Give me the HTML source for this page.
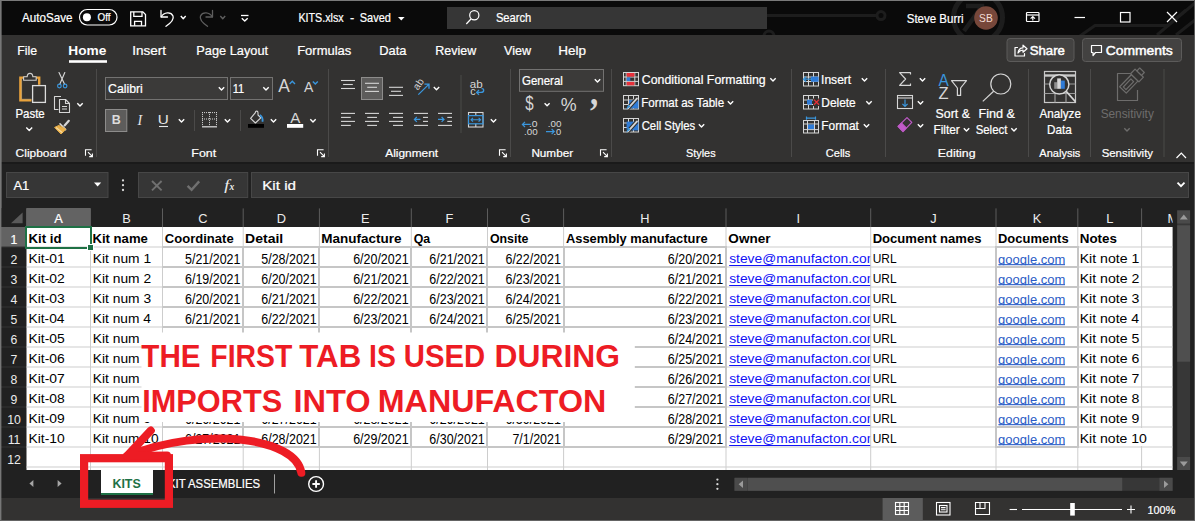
<!DOCTYPE html>
<html lang="en"><head><meta charset="utf-8"><title>KITS.xlsx - Excel</title>
<style>
html,body{margin:0;padding:0;background:#212121;overflow:hidden}
body{width:1195px;height:521px;position:relative;font-family:"Liberation Sans",sans-serif}
svg{position:absolute;left:0;top:0;display:block;font-family:"Liberation Sans",sans-serif}
text{white-space:pre}
</style></head><body>
<svg width="1195" height="521" viewBox="0 0 1195 521">
<rect x="0" y="0" width="1195" height="521" fill="#212121"/>
<rect x="0" y="0" width="1195" height="35" fill="#0a0a0a"/>
<rect x="0" y="35" width="1195" height="127" fill="#333231"/>
<rect x="0" y="162" width="1195" height="2" fill="#1a1a1a"/>
<rect x="0" y="167" width="1195" height="41" fill="#212121"/>
<rect x="0" y="0" width="1195" height="1" fill="#7a7a7a"/>
<rect x="0" y="0" width="1.4" height="521" fill="#777"/>
<rect x="1194" y="0" width="1" height="521" fill="#5a5a5a"/>
<clipPath id="tb"><rect x="0" y="1" width="1195" height="34"/></clipPath>
<g stroke="#1d1d1d" stroke-width="3" fill="none" clip-path="url(#tb)">
<path d="M767 15.6 H877"/><circle cx="881" cy="15.6" r="4"/><circle cx="769" cy="36" r="5"/>
<circle cx="978" cy="17.5" r="24.5" stroke-width="5"/><path d="M964 31 L980 9 M966 6 H982 V22" stroke-width="4.5"/>
<path d="M1195 3 L1157 35 M1195 20 L1176 35 M1080 36 L1095 25.5 H1168 L1186 10"/>
</g>
<text x="22.00" y="22.30" font-size="12.6" fill="#fff" textLength="50.46" lengthAdjust="spacingAndGlyphs" stroke="#fff" stroke-width="0.22">AutoSave</text>
<rect x="79.5" y="9.5" width="37.5" height="15.5" fill="none" stroke="#fff" stroke-width="1.2" rx="7.75"/>
<circle cx="86.9" cy="17.2" r="4" fill="#fff"/>
<text x="97.54" y="21.20" font-size="10.8" fill="#fff" textLength="12.99" lengthAdjust="spacingAndGlyphs" stroke="#fff" stroke-width="0.22">Off</text>
<g stroke="#fff" stroke-width="1.3" fill="none" stroke-linejoin="miter">
<path d="M130.7 11.8 H142.8 L145.5 14.5 V25.8 H130.7 Z"/>
<path d="M133.8 11.8 V16.4 H142 V11.8"/><path d="M134.6 25.8 V21.4 H141.5 V25.8"/>
</g>
<g stroke="#fff" stroke-width="1.3" fill="none" stroke-linecap="round" stroke-linejoin="round">
<path d="M161 10.5 V17 H167.5"/><path d="M161.3 16.8 C164 12 171 11.5 173 16 C174.5 20 170 23.5 166 26.3"/>
</g>
<path d="M180.80 16.00 L183.25 18.70 L185.70 16.00" stroke="#fff" fill="none" stroke-width="1.4" stroke-linejoin="round"/>
<g stroke="#5e5e5e" stroke-width="1.3" fill="none" stroke-linecap="round" stroke-linejoin="round">
<path d="M212.5 10.5 V17 H206"/><path d="M212.2 16.8 C209.5 12 202.5 11.5 200.5 16 C199 20 203.5 23.5 207.5 26.3"/>
</g>
<path d="M220.30 16.00 L222.75 18.70 L225.20 16.00" stroke="#5e5e5e" fill="none" stroke-width="1.4" stroke-linejoin="round"/>
<line x1="241" y1="15.5" x2="248.5" y2="15.5" stroke="#fff" stroke-width="1.3"/>
<path d="M241.80 18.20 L244.75 21.10 L247.70 18.20" stroke="#fff" fill="none" stroke-width="1.4" stroke-linejoin="round"/>
<text x="298.46" y="21.80" font-size="12.6" fill="#fff" textLength="45.25" lengthAdjust="spacingAndGlyphs" stroke="#fff" stroke-width="0.22">KITS.xlsx</text>
<text x="350.00" y="21.80" font-size="12.6" fill="#fff" stroke="#fff" stroke-width="0.22">-</text>
<text x="359.79" y="21.80" font-size="12.6" fill="#fff" textLength="31.11" lengthAdjust="spacingAndGlyphs" stroke="#fff" stroke-width="0.22">Saved</text>
<path d="M398 17 H404.6 L401.3 20.6 Z" stroke="none" fill="#fff" stroke-width="1"/>
<rect x="447" y="7" width="320" height="22" fill="#363636"/>
<circle cx="474.3" cy="15.3" r="4.6" fill="none" stroke="#fff" stroke-width="1.2"/>
<line x1="471" y1="19" x2="466.3" y2="24" stroke="#fff" stroke-width="1.2"/>
<text x="495.88" y="21.80" font-size="12.6" fill="#fff" textLength="35.38" lengthAdjust="spacingAndGlyphs" stroke="#fff" stroke-width="0.22">Search</text>
<text x="906.76" y="22.80" font-size="12.6" fill="#fff" textLength="56.86" lengthAdjust="spacingAndGlyphs" stroke="#fff" stroke-width="0.22">Steve Burri</text>
<circle cx="986" cy="18" r="11.8" fill="#77473a"/>
<text x="979.12" y="22.00" font-size="10.5" fill="#f3ddd5" textLength="13.62" lengthAdjust="spacingAndGlyphs">SB</text>
<g stroke="#fff" stroke-width="1.2" fill="none">
<rect x="1026.5" y="12.5" width="12.5" height="9" rx="0.8"/><path d="M1026.5 15 H1039"/><path d="M1032.8 20.5 V16.6 M1030.6 18.6 L1032.8 16.5 L1035 18.6"/>
</g>
<line x1="1074.5" y1="17.5" x2="1085" y2="17.5" stroke="#fff" stroke-width="1.2"/>
<rect x="1120.5" y="12.5" width="9.5" height="9.5" fill="none" stroke="#fff" stroke-width="1.2"/>
<path d="M1167 12 L1177 22 M1177 12 L1167 22" stroke="#fff" fill="none" stroke-width="1.2"/>
<text x="17.34" y="54.60" font-size="12.6" fill="#fff" textLength="19.87" lengthAdjust="spacingAndGlyphs" stroke="#fff" stroke-width="0.22">File</text>
<text x="68.34" y="54.60" font-size="12.6" fill="#fff" font-weight="700" textLength="38.04" lengthAdjust="spacingAndGlyphs">Home</text>
<rect x="69" y="60.2" width="38" height="2.6" fill="#fff"/>
<text x="132.23" y="54.60" font-size="12.6" fill="#fff" textLength="33.79" lengthAdjust="spacingAndGlyphs" stroke="#fff" stroke-width="0.22">Insert</text>
<text x="196.30" y="54.60" font-size="12.6" fill="#fff" textLength="71.78" lengthAdjust="spacingAndGlyphs" stroke="#fff" stroke-width="0.22">Page Layout</text>
<text x="297.18" y="54.60" font-size="12.6" fill="#fff" textLength="54.16" lengthAdjust="spacingAndGlyphs" stroke="#fff" stroke-width="0.22">Formulas</text>
<text x="379.19" y="54.60" font-size="12.6" fill="#fff" textLength="27.24" lengthAdjust="spacingAndGlyphs" stroke="#fff" stroke-width="0.22">Data</text>
<text x="435.33" y="54.60" font-size="12.6" fill="#fff" textLength="40.84" lengthAdjust="spacingAndGlyphs" stroke="#fff" stroke-width="0.22">Review</text>
<text x="504.00" y="54.60" font-size="12.6" fill="#fff" textLength="27.11" lengthAdjust="spacingAndGlyphs" stroke="#fff" stroke-width="0.22">View</text>
<text x="558.24" y="54.60" font-size="12.6" fill="#fff" textLength="27.81" lengthAdjust="spacingAndGlyphs" stroke="#fff" stroke-width="0.22">Help</text>
<rect x="1007" y="38.5" width="67" height="23" fill="#434241" stroke="#5c5b5a" stroke-width="1" rx="3"/>
<g stroke="#fff" stroke-width="1.2" fill="none" stroke-linejoin="round" stroke-linecap="round">
<path d="M1017.5 47.5 H1015 V56 H1024.5 V53.5"/><path d="M1018 53 C1018.5 49.5 1020.5 47.8 1023 47.8 V45.2 L1027 48.8 L1023 52.2 V50 C1021 50 1019.5 51 1018 53 Z"/>
</g>
<text x="1029.68" y="54.60" font-size="12.6" fill="#fff" textLength="35.19" lengthAdjust="spacingAndGlyphs" stroke="#fff" stroke-width="0.45">Share</text>
<rect x="1082.5" y="38.5" width="99" height="23" fill="#434241" stroke="#5c5b5a" stroke-width="1" rx="3"/>
<path d="M1091.5 45.5 H1101.5 V52.5 H1095.5 L1093 55.5 V52.5 H1091.5 Z" stroke="#fff" fill="none" stroke-width="1.2" stroke-linejoin="round"/>
<text x="1105.65" y="54.60" font-size="12.6" fill="#fff" textLength="67.17" lengthAdjust="spacingAndGlyphs" stroke="#fff" stroke-width="0.45">Comments</text>
<rect x="96.0" y="69" width="1" height="88" fill="#4b4a49"/>
<rect x="328.0" y="69" width="1" height="88" fill="#4b4a49"/>
<rect x="510.0" y="69" width="1" height="88" fill="#4b4a49"/>
<rect x="611.0" y="69" width="1" height="88" fill="#4b4a49"/>
<rect x="791.0" y="69" width="1" height="88" fill="#4b4a49"/>
<rect x="885.0" y="69" width="1" height="88" fill="#4b4a49"/>
<rect x="1028.0" y="69" width="1" height="88" fill="#4b4a49"/>
<rect x="1090.0" y="69" width="1" height="88" fill="#4b4a49"/>
<rect x="1163.5" y="69" width="1" height="88" fill="#4b4a49"/>
<g fill="none" stroke-linejoin="miter">
<path d="M31.5 100.4 H20.4 V77.6 H39.2 V84.8" stroke="#e9a23b" stroke-width="2.4"/>
<path d="M31.5 99.2 H21.6 V78.8" stroke="#f6d59c" stroke-width="0.6" opacity="0.7"/>
<path d="M23.6 80.2 V76.8 H27.2 C27.2 72.2 32.8 72.2 32.8 76.8 H36.2 V80.2 Z" stroke="#cfcfcf" stroke-width="1.1" fill="#333231" stroke-linejoin="round"/>
<rect x="32.6" y="85.6" width="12.8" height="16.8" stroke="#dcdcdc" stroke-width="1.3" fill="#333231"/>
</g>
<text x="15.41" y="117.90" font-size="12.4" fill="#fff" textLength="29.27" lengthAdjust="spacingAndGlyphs" stroke="#fff" stroke-width="0.22">Paste</text>
<path d="M26.30 127.50 L29.25 130.40 L32.20 127.50" stroke="#fff" fill="none" stroke-width="1.4" stroke-linejoin="round"/>
<g fill="none" stroke-linecap="round">
<path d="M59 72.6 L64.6 84.2 M64.8 72.6 L59.8 84.2" stroke="#d6d6d6" stroke-width="1.15"/>
<circle cx="59.4" cy="86" r="1.8" stroke="#3a96dd" stroke-width="1.2"/><circle cx="65.1" cy="86" r="1.8" stroke="#3a96dd" stroke-width="1.2"/>
</g>
<g fill="#333231" stroke="#d6d6d6" stroke-width="1.1" stroke-linejoin="round">
<path d="M61 96.5 H54.5 V109.5 H58.5" fill="none"/>
<path d="M59.5 99.5 H65.5 L69.5 103.5 V112.5 H59.5 Z"/><path d="M65.5 99.5 V103.5 H69.5" fill="none"/>
<path d="M62 106.5 H67 M62 109 H67" fill="none"/>
</g>
<path d="M77.30 103.30 L80.00 106.00 L82.70 103.30" stroke="#fff" fill="none" stroke-width="1.4" stroke-linejoin="round"/>
<g stroke-linejoin="round" stroke-linecap="round">
<path d="M64.6 125.4 L68.8 120.8" stroke="#d6d6d6" stroke-width="2.2" fill="none"/>
<path d="M60 123.8 L65.6 129.6" stroke="#d6d6d6" stroke-width="1.6" fill="none"/>
<path d="M59 125.4 L54.6 127.4 L61 134 L65.6 129.6 Z" fill="#e9b04a" stroke="#e9b04a" stroke-width="1"/>
<path d="M56.4 127.8 L62 132.4" stroke="#f8dca6" stroke-width="1.2" fill="none"/>
</g>
<text x="15.64" y="157.00" font-size="11.8" fill="#fff" textLength="51.09" lengthAdjust="spacingAndGlyphs" stroke="#fff" stroke-width="0.22">Clipboard</text>
<g stroke="#fff" stroke-width="1.1" fill="none"><path d="M91.6 149.7 H85.5 V155.79999999999998"/><path d="M88 152.2 L92.4 156.6 M89.2 156.6 H92.4 V153.39999999999998"/></g>
<rect x="105.5" y="77.5" width="122" height="22" fill="#3b3a39" stroke="#737271" stroke-width="1"/>
<text x="108.02" y="92.60" font-size="12.4" fill="#fff" textLength="34.82" lengthAdjust="spacingAndGlyphs" stroke="#fff" stroke-width="0.22">Calibri</text>
<path d="M218.80 87.30 L221.50 90.00 L224.20 87.30" stroke="#fff" fill="none" stroke-width="1.4" stroke-linejoin="round"/>
<rect x="230.5" y="77.5" width="42" height="22" fill="#3b3a39" stroke="#737271" stroke-width="1"/>
<text x="232.74" y="92.60" font-size="12.4" fill="#fff" textLength="11.49" lengthAdjust="spacingAndGlyphs" stroke="#fff" stroke-width="0.22">11</text>
<path d="M263.30 87.30 L266.00 90.00 L268.70 87.30" stroke="#fff" fill="none" stroke-width="1.4" stroke-linejoin="round"/>
<text x="278.30" y="92.40" font-size="17.5" fill="#d6d6d6" textLength="11.61" lengthAdjust="spacingAndGlyphs">A</text>
<path d="M289.6 84 L292.3 81.2 L295 84" stroke="#3a96dd" fill="none" stroke-width="1.4"/>
<text x="304.00" y="92.40" font-size="14.2" fill="#d6d6d6" textLength="9.33" lengthAdjust="spacingAndGlyphs">A</text>
<path d="M312.8 81.4 L315.3 84 L317.8 81.4" stroke="#3a96dd" fill="none" stroke-width="1.4"/>
<rect x="105.5" y="109.5" width="21.3" height="22" fill="#5d5c5b" stroke="#8d8c8b" stroke-width="1"/>
<text x="111.82" y="124.30" font-size="13.4" fill="#dcdcdc" font-weight="700" textLength="9.01" lengthAdjust="spacingAndGlyphs">B</text>
<text x="137.5" y="125.4" font-size="14" font-style="italic" fill="#e6e6e6" font-family="'Liberation Serif',serif">I</text>
<text x="157.81" y="124.20" font-size="12.6" fill="#e6e6e6" textLength="11.04" lengthAdjust="spacingAndGlyphs">U</text>
<line x1="159" y1="126.5" x2="168" y2="126.5" stroke="#e6e6e6" stroke-width="1.1"/>
<path d="M178.80 119.30 L181.50 122.00 L184.20 119.30" stroke="#fff" fill="none" stroke-width="1.4" stroke-linejoin="round"/>
<rect x="194" y="110" width="1" height="21" fill="#4b4a49"/>
<g stroke="#d6d6d6" stroke-width="1.1" fill="none">
<path d="M202 112.6 H217 M202 119 H217 M202.5 112.1 V125.1 M209.5 112.1 V125.1 M216.5 112.1 V125.1" stroke-dasharray="1 1" stroke-width="1"/>
<path d="M202 126.8 H217" stroke-width="1.3"/>
</g>
<path d="M224.80 119.30 L227.50 122.00 L230.20 119.30" stroke="#fff" fill="none" stroke-width="1.4" stroke-linejoin="round"/>
<rect x="240" y="110" width="1" height="21" fill="#4b4a49"/>
<g fill="none" stroke="#d6d6d6" stroke-width="1.1" stroke-linejoin="round">
<path d="M255.4 112.6 L250.6 118.4 L255.4 123 L260.8 117.8 L258 115 V112.8 C258 110.6 255.4 110.6 255.4 112.6 Z"/>
<path d="M259.8 115 C262 116.4 263 119 262.4 121.8" stroke="#3a96dd" stroke-width="1.8"/>
</g>
<rect x="248" y="124" width="16" height="3.8" fill="#000"/>
<path d="M270.80 119.30 L273.50 122.00 L276.20 119.30" stroke="#fff" fill="none" stroke-width="1.4" stroke-linejoin="round"/>
<text x="290.20" y="122.70" font-size="14.8" fill="#d6d6d6" textLength="10.13" lengthAdjust="spacingAndGlyphs">A</text>
<rect x="287" y="124" width="16.2" height="3.8" fill="#fff"/>
<path d="M310.30 119.30 L313.00 122.00 L315.70 119.30" stroke="#fff" fill="none" stroke-width="1.4" stroke-linejoin="round"/>
<text x="191.33" y="157.00" font-size="11.8" fill="#fff" textLength="24.88" lengthAdjust="spacingAndGlyphs" stroke="#fff" stroke-width="0.22">Font</text>
<g stroke="#fff" stroke-width="1.1" fill="none"><path d="M323.6 149.7 H317.5 V155.79999999999998"/><path d="M320 152.2 L324.4 156.6 M321.2 156.6 H324.4 V153.39999999999998"/></g>
<line x1="341" y1="80.5" x2="355" y2="80.5" stroke="#d6d6d6" stroke-width="1.1"/>
<line x1="343.1" y1="84.5" x2="352.8" y2="84.5" stroke="#d6d6d6" stroke-width="1.1"/>
<line x1="341" y1="88.5" x2="355" y2="88.5" stroke="#d6d6d6" stroke-width="1.1"/>
<rect x="361.5" y="77.5" width="21" height="22" fill="#5d5c5b" stroke="#8d8c8b" stroke-width="1"/>
<line x1="365" y1="83.3" x2="379" y2="83.3" stroke="#d6d6d6" stroke-width="1.1"/>
<line x1="367.2" y1="87.3" x2="377" y2="87.3" stroke="#d6d6d6" stroke-width="1.1"/>
<line x1="365" y1="91.4" x2="379" y2="91.4" stroke="#d6d6d6" stroke-width="1.1"/>
<line x1="389" y1="87.3" x2="403" y2="87.3" stroke="#d6d6d6" stroke-width="1.1"/>
<line x1="391" y1="91.3" x2="401" y2="91.3" stroke="#d6d6d6" stroke-width="1.1"/>
<line x1="389" y1="95.4" x2="403" y2="95.4" stroke="#d6d6d6" stroke-width="1.1"/>
<text x="0" y="0" font-size="10.2" fill="#d6d6d6" transform="translate(418 90.8) rotate(-56)">ab</text>
<path d="M418.3 94.6 L428.8 84.4 M424.4 84.2 H429 V88.8" stroke="#3a96dd" fill="none" stroke-width="1.3"/>
<path d="M433.80 87.00 L436.50 89.70 L439.20 87.00" stroke="#fff" fill="none" stroke-width="1.4" stroke-linejoin="round"/>
<line x1="341" y1="113.4" x2="355" y2="113.4" stroke="#d6d6d6" stroke-width="1.1"/>
<line x1="365" y1="113.4" x2="379" y2="113.4" stroke="#d6d6d6" stroke-width="1.1"/>
<line x1="389" y1="113.4" x2="403" y2="113.4" stroke="#d6d6d6" stroke-width="1.1"/>
<line x1="341" y1="117.4" x2="350.8" y2="117.4" stroke="#d6d6d6" stroke-width="1.1"/>
<line x1="367.2" y1="117.4" x2="377" y2="117.4" stroke="#d6d6d6" stroke-width="1.1"/>
<line x1="393" y1="117.4" x2="403" y2="117.4" stroke="#d6d6d6" stroke-width="1.1"/>
<line x1="341" y1="121.4" x2="355" y2="121.4" stroke="#d6d6d6" stroke-width="1.1"/>
<line x1="365" y1="121.4" x2="379" y2="121.4" stroke="#d6d6d6" stroke-width="1.1"/>
<line x1="389" y1="121.4" x2="403" y2="121.4" stroke="#d6d6d6" stroke-width="1.1"/>
<line x1="341" y1="125.4" x2="350.8" y2="125.4" stroke="#d6d6d6" stroke-width="1.1"/>
<line x1="367.2" y1="125.4" x2="377" y2="125.4" stroke="#d6d6d6" stroke-width="1.1"/>
<line x1="393" y1="125.4" x2="403" y2="125.4" stroke="#d6d6d6" stroke-width="1.1"/>
<line x1="414" y1="113.4" x2="428" y2="113.4" stroke="#d6d6d6" stroke-width="1.1"/>
<line x1="423" y1="117.4" x2="428" y2="117.4" stroke="#d6d6d6" stroke-width="1.1"/>
<line x1="423" y1="121.4" x2="428" y2="121.4" stroke="#d6d6d6" stroke-width="1.1"/>
<line x1="414" y1="125.4" x2="428" y2="125.4" stroke="#d6d6d6" stroke-width="1.1"/>
<path d="M420.4 119.4 H414.4 M416.8 117 L414.4 119.4 L416.8 121.8" stroke="#3a96dd" fill="none" stroke-width="1.2"/>
<line x1="438" y1="113.4" x2="452" y2="113.4" stroke="#d6d6d6" stroke-width="1.1"/>
<line x1="447.3" y1="117.4" x2="452" y2="117.4" stroke="#d6d6d6" stroke-width="1.1"/>
<line x1="447.3" y1="121.4" x2="452" y2="121.4" stroke="#d6d6d6" stroke-width="1.1"/>
<line x1="438" y1="125.4" x2="452" y2="125.4" stroke="#d6d6d6" stroke-width="1.1"/>
<path d="M438 119.4 H444 M441.6 117 L444 119.4 L441.6 121.8" stroke="#3a96dd" fill="none" stroke-width="1.2"/>
<rect x="460.5" y="75" width="1" height="58" fill="#4b4a49"/>
<text x="469.75" y="87.80" font-size="10.8" fill="#d6d6d6" textLength="12.94" lengthAdjust="spacingAndGlyphs">ab</text>
<text x="470.30" y="95.00" font-size="10.8" fill="#d6d6d6">c</text>
<path d="M476.6 92.4 H481 C484.6 92.4 484.4 88.2 481.6 88.6 M479 90 L476.6 92.4 L479 94.8" stroke="#3a96dd" fill="none" stroke-width="1.3"/>
<g fill="none" stroke="#d6d6d6" stroke-width="1.1">
<rect x="468.5" y="112.5" width="14.5" height="14.5"/><path d="M475.8 112.5 V115.6 M475.8 123.8 V127"/>
<rect x="468.5" y="115.6" width="14.5" height="8.2" stroke="#3a96dd" stroke-width="1.2"/>
<path d="M471 119.7 H480.6 M473 117.8 L471 119.7 L473 121.6 M478.6 117.8 L480.6 119.7 L478.6 121.6" stroke="#3a96dd" stroke-width="1.1"/>
</g>
<path d="M490.80 119.30 L493.50 122.00 L496.20 119.30" stroke="#fff" fill="none" stroke-width="1.4" stroke-linejoin="round"/>
<text x="385.30" y="157.00" font-size="11.8" fill="#fff" textLength="52.81" lengthAdjust="spacingAndGlyphs" stroke="#fff" stroke-width="0.22">Alignment</text>
<g stroke="#fff" stroke-width="1.1" fill="none"><path d="M505.6 149.7 H499.5 V155.79999999999998"/><path d="M502 152.2 L506.4 156.6 M503.2 156.6 H506.4 V153.39999999999998"/></g>
<rect x="519.5" y="69.5" width="84" height="21.8" fill="#3b3a39" stroke="#737271" stroke-width="1"/>
<text x="521.96" y="84.80" font-size="12.4" fill="#fff" textLength="40.88" lengthAdjust="spacingAndGlyphs" stroke="#fff" stroke-width="0.22">General</text>
<path d="M594.80 79.30 L597.50 82.00 L600.20 79.30" stroke="#fff" fill="none" stroke-width="1.4" stroke-linejoin="round"/>
<text x="525.16" y="110.30" font-size="19.4" fill="#d6d6d6" textLength="8.38" lengthAdjust="spacingAndGlyphs">$</text>
<path d="M544.60 103.30 L547.10 105.80 L549.60 103.30" stroke="#fff" fill="none" stroke-width="1.4" stroke-linejoin="round"/>
<text x="560.84" y="111.00" font-size="18" fill="#d6d6d6" textLength="15.89" lengthAdjust="spacingAndGlyphs">%</text>
<text x="590" y="104.7" font-size="38" font-weight="700" fill="#d6d6d6" font-family="'Liberation Serif',serif" textLength="8.2" lengthAdjust="spacingAndGlyphs">,</text>
<text x="528.93" y="126.80" font-size="8.8" fill="#d6d6d6" textLength="8.66" lengthAdjust="spacingAndGlyphs">.0</text>
<text x="523.98" y="134.50" font-size="8.8" fill="#d6d6d6" textLength="13.68" lengthAdjust="spacingAndGlyphs">.00</text>
<path d="M530.6 124.4 H522.4 M525 121.8 L522.4 124.4 L525 127" stroke="#3a96dd" fill="none" stroke-width="1.2"/>
<text x="547.78" y="126.80" font-size="8.8" fill="#d6d6d6" textLength="13.68" lengthAdjust="spacingAndGlyphs">.00</text>
<text x="553.52" y="134.50" font-size="8.8" fill="#d6d6d6" textLength="7.83" lengthAdjust="spacingAndGlyphs">.0</text>
<path d="M546 131.6 H554.2 M551.6 129 L554.2 131.6 L551.6 134.2" stroke="#3a96dd" fill="none" stroke-width="1.2"/>
<text x="531.38" y="157.00" font-size="11.8" fill="#fff" textLength="41.71" lengthAdjust="spacingAndGlyphs" stroke="#fff" stroke-width="0.22">Number</text>
<g stroke="#fff" stroke-width="1.1" fill="none"><path d="M606.6 149.7 H600.5 V155.79999999999998"/><path d="M603 152.2 L607.4 156.6 M604.2 156.6 H607.4 V153.39999999999998"/></g>
<g fill="none" stroke="#d6d6d6" stroke-width="1"><rect x="623.5" y="72.5" width="15" height="13.2"/><path d="M623.5 77 H638.5 M623.5 81.4 H638.5 M626.2 72.5 V85.7 M634.8 72.5 V85.7"/></g>
<rect x="626.7" y="73" width="7.7" height="3.6" fill="#e8303a"/>
<rect x="626.7" y="77.5" width="3.6" height="3.5" fill="#2f7bd6"/>
<rect x="626.7" y="81.9" width="7.7" height="3.4" fill="#e8303a"/>
<text x="641.82" y="83.90" font-size="12.4" fill="#fff" textLength="123.92" lengthAdjust="spacingAndGlyphs" stroke="#fff" stroke-width="0.22">Conditional Formatting</text>
<path d="M770.30 78.30 L773.00 81.00 L775.70 78.30" stroke="#fff" fill="none" stroke-width="1.4" stroke-linejoin="round"/>
<g fill="none" stroke="#d6d6d6" stroke-width="1"><rect x="623.5" y="95.5" width="15" height="13.5"/><path d="M623.5 100 H638.5 M623.5 104.5 H638.5 M628.5 95.5 V109 M633.5 95.5 V109"/></g>
<rect x="629" y="100.2" width="9.4" height="8.2" fill="#2f7bd6"/>
<path d="M627.5 108.8 L636.8 98.6" stroke="#333231" fill="none" stroke-width="4"/>
<path d="M628 108.3 L637 98.4" stroke="#d6d6d6" fill="none" stroke-width="1.8" stroke-linecap="round"/>
<path d="M626 109.6 L630.6 106.4 L628.2 104.8 Z" stroke="none" fill="#3a96dd" stroke-width="1"/>
<text x="641.30" y="107.00" font-size="12.4" fill="#fff" textLength="82.79" lengthAdjust="spacingAndGlyphs" stroke="#fff" stroke-width="0.22">Format as Table</text>
<path d="M727.80 101.30 L730.50 104.00 L733.20 101.30" stroke="#fff" fill="none" stroke-width="1.4" stroke-linejoin="round"/>
<g fill="none" stroke="#d6d6d6" stroke-width="1"><rect x="623.5" y="118.5" width="15" height="13.5"/><path d="M623.5 123 H638.5 M623.5 127.5 H638.5 M628.5 118.5 V132 M633.5 118.5 V132"/></g>
<rect x="626.6" y="121.6" width="11.8" height="8.8" fill="#2f7bd6"/>
<path d="M627.5 131.8 L636.8 121.6" stroke="#333231" fill="none" stroke-width="4"/>
<path d="M628 131.3 L637 121.4" stroke="#d6d6d6" fill="none" stroke-width="1.8" stroke-linecap="round"/>
<path d="M626 132.6 L630.6 129.4 L628.2 127.8 Z" stroke="none" fill="#3a96dd" stroke-width="1"/>
<text x="641.67" y="129.80" font-size="12.4" fill="#fff" textLength="53.54" lengthAdjust="spacingAndGlyphs" stroke="#fff" stroke-width="0.22">Cell Styles</text>
<path d="M698.80 124.30 L701.50 127.00 L704.20 124.30" stroke="#fff" fill="none" stroke-width="1.4" stroke-linejoin="round"/>
<text x="685.99" y="157.00" font-size="11.8" fill="#fff" textLength="29.60" lengthAdjust="spacingAndGlyphs" stroke="#fff" stroke-width="0.22">Styles</text>
<g fill="none" stroke="#d6d6d6" stroke-width="1"><rect x="803.5" y="72.5" width="15" height="13.5"/><path d="M803.5 77 H818.5 M803.5 81.5 H818.5 M808.5 72.5 V86 M813.5 72.5 V86"/></g>
<rect x="811" y="76.6" width="7.6" height="5.2" fill="#2f7bd6"/>
<path d="M812 79.2 H803.6 M806.2 76.6 L803.6 79.2 L806.2 81.8" stroke="#3a96dd" fill="none" stroke-width="1.3"/>
<text x="821.07" y="83.90" font-size="12.4" fill="#fff" textLength="30.13" lengthAdjust="spacingAndGlyphs" stroke="#fff" stroke-width="0.22">Insert</text>
<path d="M861.80 78.30 L864.50 81.00 L867.20 78.30" stroke="#fff" fill="none" stroke-width="1.4" stroke-linejoin="round"/>
<g fill="none" stroke="#d6d6d6" stroke-width="1"><rect x="803.5" y="95.5" width="15" height="13.5"/><path d="M803.5 100 H818.5 M803.5 104.5 H818.5 M808.5 95.5 V109 M813.5 95.5 V109"/></g>
<rect x="807" y="99.8" width="5" height="4.8" fill="#2f7bd6"/>
<rect x="813" y="98.5" width="7" height="7.6" fill="#333231"/>
<path d="M814 99.6 L819 104.8 M819 99.6 L814 104.8" stroke="#e8303a" fill="none" stroke-width="1.3"/>
<text x="821.27" y="107.00" font-size="12.4" fill="#fff" textLength="34.49" lengthAdjust="spacingAndGlyphs" stroke="#fff" stroke-width="0.22">Delete</text>
<path d="M866.30 101.30 L869.00 104.00 L871.70 101.30" stroke="#fff" fill="none" stroke-width="1.4" stroke-linejoin="round"/>
<g fill="none" stroke="#d6d6d6" stroke-width="1"><rect x="803.5" y="120.5" width="15" height="12.5"/><path d="M803.5 124 H818.5 M803.5 129.6 H818.5 M807.5 120.5 V133 M814.5 120.5 V133"/></g>
<rect x="808" y="124.5" width="6" height="4.6" fill="#2f7bd6"/>
<path d="M806.5 118.2 H815.5 M806.5 116.6 V119.8 M815.5 116.6 V119.8" stroke="#3a96dd" fill="none" stroke-width="1.2"/>
<text x="821.27" y="129.80" font-size="12.4" fill="#fff" textLength="37.66" lengthAdjust="spacingAndGlyphs" stroke="#fff" stroke-width="0.22">Format</text>
<path d="M863.80 124.30 L866.50 127.00 L869.20 124.30" stroke="#fff" fill="none" stroke-width="1.4" stroke-linejoin="round"/>
<text x="825.78" y="157.00" font-size="11.8" fill="#fff" textLength="24.61" lengthAdjust="spacingAndGlyphs" stroke="#fff" stroke-width="0.22">Cells</text>
<path d="M910.5 74.6 V72.6 H899.6 L905.6 79 L899.6 85.4 H910.5 V83.4" stroke="#d6d6d6" fill="none" stroke-width="1.2" stroke-linejoin="round"/>
<path d="M919.80 78.30 L922.50 81.00 L925.20 78.30" stroke="#fff" fill="none" stroke-width="1.4" stroke-linejoin="round"/>
<g fill="none" stroke="#d6d6d6" stroke-width="1.1"><rect x="897.5" y="95.5" width="15" height="13"/><path d="M897.5 98 H912.5"/></g>
<path d="M905 99.6 V106.4 M902.4 103.8 L905 106.4 L907.6 103.8" stroke="#3a96dd" fill="none" stroke-width="1.2"/>
<path d="M917.80 101.30 L920.50 104.00 L923.20 101.30" stroke="#fff" fill="none" stroke-width="1.4" stroke-linejoin="round"/>
<g stroke-linejoin="round"><path d="M898 126.4 L907 117.6 L911.8 122.4 L903 131.6 Z" fill="none" stroke="#c05ac8" stroke-width="1.2"/><path d="M898 126.4 L901.6 122.9 L906.4 127.8 L903 131.6 Z" fill="#c05ac8" stroke="#c05ac8" stroke-width="1"/></g>
<path d="M917.80 124.30 L920.50 127.00 L923.20 124.30" stroke="#fff" fill="none" stroke-width="1.4" stroke-linejoin="round"/>
<text x="938.60" y="85.60" font-size="15.6" fill="#3a96dd" textLength="10.32" lengthAdjust="spacingAndGlyphs">A</text>
<text x="938.49" y="99.20" font-size="16.4" fill="#d6d6d6" textLength="10.05" lengthAdjust="spacingAndGlyphs">Z</text>
<path d="M951.5 80.6 H966.5 L960.6 88 V95.4 H957.4 V88 Z" stroke="#d6d6d6" fill="none" stroke-width="1.2" stroke-linejoin="round"/>
<text x="935.62" y="117.90" font-size="12.4" fill="#fff" textLength="34.34" lengthAdjust="spacingAndGlyphs" stroke="#fff" stroke-width="0.22">Sort &amp;</text>
<text x="933.47" y="133.80" font-size="12.4" fill="#fff" textLength="26.35" lengthAdjust="spacingAndGlyphs" stroke="#fff" stroke-width="0.22">Filter</text>
<path d="M963.80 128.30 L966.50 131.00 L969.20 128.30" stroke="#fff" fill="none" stroke-width="1.4" stroke-linejoin="round"/>
<circle cx="1000.8" cy="84" r="10" fill="none" stroke="#d6d6d6" stroke-width="1.2"/>
<line x1="993.6" y1="91.2" x2="982.8" y2="101.4" stroke="#d6d6d6" stroke-width="1.2"/>
<text x="978.41" y="117.90" font-size="12.4" fill="#fff" textLength="36.58" lengthAdjust="spacingAndGlyphs" stroke="#fff" stroke-width="0.22">Find &amp;</text>
<text x="975.67" y="133.80" font-size="12.4" fill="#fff" textLength="31.69" lengthAdjust="spacingAndGlyphs" stroke="#fff" stroke-width="0.22">Select</text>
<path d="M1011.30 128.30 L1014.00 131.00 L1016.70 128.30" stroke="#fff" fill="none" stroke-width="1.4" stroke-linejoin="round"/>
<text x="937.84" y="157.00" font-size="11.8" fill="#fff" textLength="37.67" lengthAdjust="spacingAndGlyphs" stroke="#fff" stroke-width="0.22">Editing</text>
<g fill="none" stroke="#c8c8c8" stroke-width="1.2">
<rect x="1044.5" y="71.5" width="31" height="31"/><path d="M1044.5 75.5 H1075.5" stroke-width="2.4"/>
<path d="M1044.5 84 H1075.5 M1044.5 93.5 H1075.5 M1055 76 V102.5 M1066 76 V102.5" stroke="#9a9a9a"/>
</g>
<circle cx="1059.3" cy="84.4" r="9.6" fill="#333231" stroke="#d6d6d6" stroke-width="1.5"/>
<rect x="1054.2" y="82.2" width="3" height="6.6" fill="#8e8e8e"/>
<rect x="1057.2" y="78.4" width="3.7" height="10.4" fill="#d6d6d6"/>
<rect x="1060.9" y="80.6" width="3.9" height="8.2" fill="#2f7bd6"/>
<line x1="1066.2" y1="91.4" x2="1075.4" y2="101.6" stroke="#d6d6d6" stroke-width="1.6"/>
<text x="1039.40" y="117.90" font-size="12.4" fill="#fff" textLength="41.49" lengthAdjust="spacingAndGlyphs" stroke="#fff" stroke-width="0.22">Analyze</text>
<text x="1047.08" y="133.80" font-size="12.4" fill="#fff" textLength="24.77" lengthAdjust="spacingAndGlyphs" stroke="#fff" stroke-width="0.22">Data</text>
<text x="1039.30" y="157.00" font-size="11.8" fill="#fff" textLength="41.10" lengthAdjust="spacingAndGlyphs" stroke="#fff" stroke-width="0.22">Analysis</text>
<g fill="none" stroke="#6e6d6c" stroke-width="1.2" stroke-linejoin="round">
<path d="M1130 73.5 H1117.5 V100.5 H1137.5 V90"/>
<g transform="translate(1132 80.6) rotate(-46)"><rect x="-13" y="-4.6" width="17" height="9.2" fill="#333231"/><rect x="-10.6" y="-1.9" width="11" height="3.8"/><rect x="4" y="-5.8" width="6.4" height="11.6" fill="#333231"/><rect x="10.4" y="-3.2" width="4" height="6.4" fill="#333231"/></g>
</g>
<text x="1100.65" y="117.90" font-size="12.4" fill="#6e6d6c" textLength="53.17" lengthAdjust="spacingAndGlyphs">Sensitivity</text>
<path d="M1124.30 128.30 L1127.00 131.00 L1129.70 128.30" stroke="#6e6d6c" fill="none" stroke-width="1.4" stroke-linejoin="round"/>
<text x="1101.67" y="157.00" font-size="11.8" fill="#fff" textLength="51.35" lengthAdjust="spacingAndGlyphs" stroke="#fff" stroke-width="0.22">Sensitivity</text>
<path d="M1176.5 158 L1181.3 153 L1186 158" stroke="#fff" fill="none" stroke-width="1.2"/>
<rect x="6.5" y="172.5" width="101.5" height="25" fill="#363636" stroke="#474747" stroke-width="1"/>
<text x="13.40" y="189.90" font-size="13" fill="#fff" textLength="15.86" lengthAdjust="spacingAndGlyphs" stroke="#fff" stroke-width="0.22">A1</text>
<path d="M94 182.6 H101.2 L97.6 186.6 Z" stroke="none" fill="#fff" stroke-width="1"/>
<circle cx="123" cy="180.4" r="1.15" fill="#d8d8d8"/>
<circle cx="123" cy="185.2" r="1.15" fill="#d8d8d8"/>
<circle cx="123" cy="190" r="1.15" fill="#d8d8d8"/>
<rect x="138.5" y="172.5" width="109.2" height="25" fill="#363636" stroke="#474747" stroke-width="1"/>
<path d="M152 181 L161.6 190.4 M161.6 181 L152 190.4" stroke="#707070" fill="none" stroke-width="1.9"/>
<path d="M187.6 185.8 L191.6 189.8 L199.2 181.4" stroke="#707070" fill="none" stroke-width="2.4"/>
<text x="224.2" y="189.8" font-size="14.5" font-style="italic" fill="#f0f0f0" font-family="'Liberation Serif',serif" textLength="5" lengthAdjust="spacingAndGlyphs">f</text>
<text x="229.4" y="190.4" font-size="9.5" font-style="italic" font-weight="700" fill="#f0f0f0" font-family="'Liberation Serif',serif">x</text>
<rect x="251.5" y="172.5" width="937" height="25" fill="#363636" stroke="#474747" stroke-width="1"/>
<text x="262.21" y="189.90" font-size="13" fill="#fff" textLength="33.77" lengthAdjust="spacingAndGlyphs" stroke="#fff" stroke-width="0.22">Kit id</text>
<path d="M1177.5 182.6 L1181 186.2 L1184.5 182.6" stroke="#fff" fill="none" stroke-width="1.8"/>
<rect x="0" y="208" width="1173" height="19" fill="#212121"/>
<rect x="26.5" y="208" width="64" height="19" fill="#636363"/>
<rect x="0" y="227" width="26" height="243" fill="#212121"/>
<rect x="1" y="227" width="25.5" height="20" fill="#636363"/>
<path d="M22.6 212.4 V223.2 H11 Z" stroke="none" fill="#5a5a5a" stroke-width="1"/>
<rect x="26.5" y="227" width="1146.1" height="243" fill="#fff"/>
<rect x="90.0" y="208.4" width="1" height="18.6" fill="#5c5c5c"/>
<rect x="162.0" y="208.4" width="1" height="18.6" fill="#5c5c5c"/>
<rect x="242.7" y="208.4" width="1" height="18.6" fill="#5c5c5c"/>
<rect x="318.9" y="208.4" width="1" height="18.6" fill="#5c5c5c"/>
<rect x="410.8" y="208.4" width="1" height="18.6" fill="#5c5c5c"/>
<rect x="487.0" y="208.4" width="1" height="18.6" fill="#5c5c5c"/>
<rect x="563.1" y="208.4" width="1" height="18.6" fill="#5c5c5c"/>
<rect x="725.5" y="208.4" width="1" height="18.6" fill="#5c5c5c"/>
<rect x="870.2" y="208.4" width="1" height="18.6" fill="#5c5c5c"/>
<rect x="995.5" y="208.4" width="1" height="18.6" fill="#5c5c5c"/>
<rect x="1077.3" y="208.4" width="1" height="18.6" fill="#5c5c5c"/>
<rect x="1141.1" y="208.4" width="1" height="18.6" fill="#5c5c5c"/>
<rect x="26" y="208.4" width="1" height="18.6" fill="#5c5c5c"/>
<rect x="1" y="246.5" width="25" height="1" fill="#343434"/>
<rect x="1" y="266.5" width="25" height="1" fill="#343434"/>
<rect x="1" y="286.5" width="25" height="1" fill="#343434"/>
<rect x="1" y="306.5" width="25" height="1" fill="#343434"/>
<rect x="1" y="326.5" width="25" height="1" fill="#343434"/>
<rect x="1" y="346.5" width="25" height="1" fill="#343434"/>
<rect x="1" y="366.5" width="25" height="1" fill="#343434"/>
<rect x="1" y="386.5" width="25" height="1" fill="#343434"/>
<rect x="1" y="406.5" width="25" height="1" fill="#343434"/>
<rect x="1" y="426.5" width="25" height="1" fill="#343434"/>
<rect x="1" y="446.5" width="25" height="1" fill="#343434"/>
<text x="58.50" y="222.70" font-size="12.8" fill="#fff" text-anchor="middle" stroke="#fff" stroke-width="0.22">A</text>
<text x="126.50" y="222.70" font-size="12.8" fill="#ececec" text-anchor="middle">B</text>
<text x="202.85" y="222.70" font-size="12.8" fill="#ececec" text-anchor="middle">C</text>
<text x="281.30" y="222.70" font-size="12.8" fill="#ececec" text-anchor="middle">D</text>
<text x="365.35" y="222.70" font-size="12.8" fill="#ececec" text-anchor="middle">E</text>
<text x="449.40" y="222.70" font-size="12.8" fill="#ececec" text-anchor="middle">F</text>
<text x="525.55" y="222.70" font-size="12.8" fill="#ececec" text-anchor="middle">G</text>
<text x="644.80" y="222.70" font-size="12.8" fill="#ececec" text-anchor="middle">H</text>
<text x="798.35" y="222.70" font-size="12.8" fill="#ececec" text-anchor="middle">I</text>
<text x="933.35" y="222.70" font-size="12.8" fill="#ececec" text-anchor="middle">J</text>
<text x="1036.90" y="222.70" font-size="12.8" fill="#ececec" text-anchor="middle">K</text>
<text x="1109.70" y="222.70" font-size="12.8" fill="#ececec" text-anchor="middle">L</text>
<clipPath id="cg"><rect x="26" y="208" width="1146.6" height="262"/></clipPath>
<g clip-path="url(#cg)">
<text x="1167.60" y="222.70" font-size="12.8" fill="#ececec">M</text>
</g>
<text x="10.59" y="243.60" font-size="13.2" fill="#fff" textLength="6.83" lengthAdjust="spacingAndGlyphs" stroke="#fff" stroke-width="0.22">1</text>
<text x="10.59" y="263.60" font-size="13.2" fill="#ececec" textLength="6.83" lengthAdjust="spacingAndGlyphs">2</text>
<text x="10.59" y="283.60" font-size="13.2" fill="#ececec" textLength="6.83" lengthAdjust="spacingAndGlyphs">3</text>
<text x="10.59" y="303.60" font-size="13.2" fill="#ececec" textLength="6.83" lengthAdjust="spacingAndGlyphs">4</text>
<text x="10.59" y="323.60" font-size="13.2" fill="#ececec" textLength="6.83" lengthAdjust="spacingAndGlyphs">5</text>
<text x="10.59" y="343.60" font-size="13.2" fill="#ececec" textLength="6.83" lengthAdjust="spacingAndGlyphs">6</text>
<text x="10.59" y="363.60" font-size="13.2" fill="#ececec" textLength="6.83" lengthAdjust="spacingAndGlyphs">7</text>
<text x="10.59" y="383.60" font-size="13.2" fill="#ececec" textLength="6.83" lengthAdjust="spacingAndGlyphs">8</text>
<text x="10.59" y="403.60" font-size="13.2" fill="#ececec" textLength="6.83" lengthAdjust="spacingAndGlyphs">9</text>
<text x="7.17" y="423.60" font-size="13.2" fill="#ececec" textLength="13.65" lengthAdjust="spacingAndGlyphs">10</text>
<text x="7.63" y="443.60" font-size="13.2" fill="#ececec" textLength="12.74" lengthAdjust="spacingAndGlyphs">11</text>
<text x="7.17" y="463.60" font-size="13.2" fill="#ececec" textLength="13.65" lengthAdjust="spacingAndGlyphs">12</text>
<rect x="90.0" y="227" width="1" height="243" fill="#cdcdcd"/>
<rect x="162.0" y="227" width="1" height="243" fill="#cdcdcd"/>
<rect x="242.7" y="227" width="1" height="243" fill="#cdcdcd"/>
<rect x="318.9" y="227" width="1" height="243" fill="#cdcdcd"/>
<rect x="410.8" y="227" width="1" height="243" fill="#cdcdcd"/>
<rect x="487.0" y="227" width="1" height="243" fill="#cdcdcd"/>
<rect x="563.1" y="227" width="1" height="243" fill="#cdcdcd"/>
<rect x="725.5" y="227" width="1" height="243" fill="#cdcdcd"/>
<rect x="870.2" y="227" width="1" height="243" fill="#cdcdcd"/>
<rect x="995.5" y="227" width="1" height="243" fill="#cdcdcd"/>
<rect x="1077.3" y="227" width="1" height="243" fill="#cdcdcd"/>
<rect x="1141.1" y="227" width="1" height="243" fill="#cdcdcd"/>
<rect x="26.5" y="246.5" width="1146" height="1" fill="#cdcdcd"/>
<rect x="26.5" y="266.5" width="1146" height="1" fill="#cdcdcd"/>
<rect x="26.5" y="286.5" width="1146" height="1" fill="#cdcdcd"/>
<rect x="26.5" y="306.5" width="1146" height="1" fill="#cdcdcd"/>
<rect x="26.5" y="326.5" width="1146" height="1" fill="#cdcdcd"/>
<rect x="26.5" y="346.5" width="1146" height="1" fill="#cdcdcd"/>
<rect x="26.5" y="366.5" width="1146" height="1" fill="#cdcdcd"/>
<rect x="26.5" y="386.5" width="1146" height="1" fill="#cdcdcd"/>
<rect x="26.5" y="406.5" width="1146" height="1" fill="#cdcdcd"/>
<rect x="26.5" y="426.5" width="1146" height="1" fill="#cdcdcd"/>
<rect x="26.5" y="446.5" width="1146" height="1" fill="#cdcdcd"/>
<rect x="26.5" y="466.5" width="1146" height="1" fill="#cdcdcd"/>
<rect x="242" y="246" width="2" height="202" fill="#c6c6c6"/>
<rect x="318" y="246" width="2" height="202" fill="#c6c6c6"/>
<rect x="410" y="246" width="2" height="202" fill="#c6c6c6"/>
<rect x="486" y="246" width="2" height="202" fill="#c6c6c6"/>
<rect x="563" y="246" width="2" height="202" fill="#c6c6c6"/>
<rect x="725" y="246" width="2" height="202" fill="#c6c6c6"/>
<rect x="162.5" y="246" width="563.5" height="2" fill="#c6c6c6"/>
<rect x="162.5" y="266" width="563.5" height="2" fill="#c6c6c6"/>
<rect x="162.5" y="286" width="563.5" height="2" fill="#c6c6c6"/>
<rect x="162.5" y="306" width="563.5" height="2" fill="#c6c6c6"/>
<rect x="162.5" y="326" width="563.5" height="2" fill="#c6c6c6"/>
<rect x="162.5" y="346" width="563.5" height="2" fill="#c6c6c6"/>
<rect x="162.5" y="366" width="563.5" height="2" fill="#c6c6c6"/>
<rect x="162.5" y="386" width="563.5" height="2" fill="#c6c6c6"/>
<rect x="162.5" y="406" width="563.5" height="2" fill="#c6c6c6"/>
<rect x="162.5" y="426" width="563.5" height="2" fill="#c6c6c6"/>
<rect x="162.5" y="446" width="563.5" height="2" fill="#c6c6c6"/>
<rect x="995" y="246" width="84" height="2" fill="#c6c6c6"/>
<rect x="995" y="266" width="84" height="2" fill="#c6c6c6"/>
<rect x="995" y="286" width="84" height="2" fill="#c6c6c6"/>
<rect x="995" y="306" width="84" height="2" fill="#c6c6c6"/>
<rect x="995" y="326" width="84" height="2" fill="#c6c6c6"/>
<rect x="995" y="346" width="84" height="2" fill="#c6c6c6"/>
<rect x="995" y="366" width="84" height="2" fill="#c6c6c6"/>
<rect x="995" y="386" width="84" height="2" fill="#c6c6c6"/>
<rect x="995" y="406" width="84" height="2" fill="#c6c6c6"/>
<rect x="995" y="426" width="84" height="2" fill="#c6c6c6"/>
<rect x="995" y="446" width="84" height="2" fill="#c6c6c6"/>
<rect x="995" y="246" width="2" height="202" fill="#c6c6c6"/>
<rect x="1077" y="246" width="2" height="202" fill="#c6c6c6"/>
<text x="28.47" y="242.90" font-size="12.4" fill="#000" font-weight="700" textLength="33.15" lengthAdjust="spacingAndGlyphs">Kit id</text>
<text x="92.48" y="242.90" font-size="12.4" fill="#000" font-weight="700" textLength="55.38" lengthAdjust="spacingAndGlyphs">Kit name</text>
<text x="164.89" y="242.90" font-size="12.4" fill="#000" font-weight="700" textLength="68.77" lengthAdjust="spacingAndGlyphs">Coordinate</text>
<text x="245.13" y="242.90" font-size="12.4" fill="#000" font-weight="700" textLength="38.11" lengthAdjust="spacingAndGlyphs">Detail</text>
<text x="321.36" y="242.90" font-size="12.4" fill="#000" font-weight="700" textLength="80.16" lengthAdjust="spacingAndGlyphs">Manufacture</text>
<text x="413.71" y="242.90" font-size="12.4" fill="#000" font-weight="700" textLength="16.47" lengthAdjust="spacingAndGlyphs">Qa</text>
<text x="489.91" y="242.90" font-size="12.4" fill="#000" font-weight="700" textLength="38.51" lengthAdjust="spacingAndGlyphs">Onsite</text>
<text x="566.00" y="242.90" font-size="12.4" fill="#000" font-weight="700" textLength="141.55" lengthAdjust="spacingAndGlyphs">Assembly manufacture</text>
<text x="728.38" y="242.90" font-size="12.4" fill="#000" font-weight="700" textLength="42.17" lengthAdjust="spacingAndGlyphs">Owner</text>
<text x="872.68" y="242.90" font-size="12.4" fill="#000" font-weight="700" textLength="108.82" lengthAdjust="spacingAndGlyphs">Document names</text>
<text x="997.99" y="242.90" font-size="12.4" fill="#000" font-weight="700" textLength="70.62" lengthAdjust="spacingAndGlyphs">Documents</text>
<text x="1079.76" y="242.90" font-size="12.4" fill="#000" font-weight="700" textLength="37.23" lengthAdjust="spacingAndGlyphs">Notes</text>
<text x="28.52" y="262.50" font-size="12.4" fill="#000" textLength="36.26" lengthAdjust="spacingAndGlyphs">Kit-01</text>
<text x="92.82" y="262.50" font-size="12.4" fill="#000" textLength="58.28" lengthAdjust="spacingAndGlyphs">Kit num 1</text>
<text x="185.06" y="263.60" font-size="14.0" fill="#000" textLength="55.44" lengthAdjust="spacingAndGlyphs">5/21/2021</text>
<text x="261.26" y="263.60" font-size="14.0" fill="#000" textLength="55.44" lengthAdjust="spacingAndGlyphs">5/28/2021</text>
<text x="353.16" y="263.60" font-size="14.0" fill="#000" textLength="55.44" lengthAdjust="spacingAndGlyphs">6/20/2021</text>
<text x="429.36" y="263.60" font-size="14.0" fill="#000" textLength="55.44" lengthAdjust="spacingAndGlyphs">6/21/2021</text>
<text x="505.46" y="263.60" font-size="14.0" fill="#000" textLength="55.44" lengthAdjust="spacingAndGlyphs">6/22/2021</text>
<text x="667.86" y="263.60" font-size="14.0" fill="#000" textLength="55.44" lengthAdjust="spacingAndGlyphs">6/20/2021</text>
<clipPath id="ce2"><rect x="727" y="247" width="143.2" height="20"/></clipPath>
<g clip-path="url(#ce2)">
<text x="729.20" y="262.50" font-size="12.4" fill="#1212f6" textLength="149.00" lengthAdjust="spacingAndGlyphs">steve@manufacton.com</text>
<rect x="729.2" y="265" width="149" height="1" fill="#1212f6"/>
</g>
<text x="872.67" y="262.50" font-size="12.4" fill="#000" textLength="23.91" lengthAdjust="spacingAndGlyphs">URL</text>
<clipPath id="cg2"><rect x="997" y="247" width="80" height="18.2"/></clipPath>
<g clip-path="url(#cg2)">
<text x="997.99" y="263.60" font-size="12.6" fill="#2a5cc6" textLength="67.40" lengthAdjust="spacingAndGlyphs">google.com</text>
</g>
<rect x="998.4" y="264.1" width="66.6" height="1.1" fill="#2a5cc6"/>
<text x="1079.70" y="262.50" font-size="12.4" fill="#000" textLength="59.63" lengthAdjust="spacingAndGlyphs">Kit note 1</text>
<text x="28.52" y="282.50" font-size="12.4" fill="#000" textLength="36.26" lengthAdjust="spacingAndGlyphs">Kit-02</text>
<text x="92.82" y="282.50" font-size="12.4" fill="#000" textLength="58.28" lengthAdjust="spacingAndGlyphs">Kit num 2</text>
<text x="185.06" y="283.60" font-size="14.0" fill="#000" textLength="55.44" lengthAdjust="spacingAndGlyphs">6/19/2021</text>
<text x="261.26" y="283.60" font-size="14.0" fill="#000" textLength="55.44" lengthAdjust="spacingAndGlyphs">6/20/2021</text>
<text x="353.16" y="283.60" font-size="14.0" fill="#000" textLength="55.44" lengthAdjust="spacingAndGlyphs">6/21/2021</text>
<text x="429.36" y="283.60" font-size="14.0" fill="#000" textLength="55.44" lengthAdjust="spacingAndGlyphs">6/22/2021</text>
<text x="505.46" y="283.60" font-size="14.0" fill="#000" textLength="55.44" lengthAdjust="spacingAndGlyphs">6/23/2021</text>
<text x="667.86" y="283.60" font-size="14.0" fill="#000" textLength="55.44" lengthAdjust="spacingAndGlyphs">6/21/2021</text>
<clipPath id="ce3"><rect x="727" y="267" width="143.2" height="20"/></clipPath>
<g clip-path="url(#ce3)">
<text x="729.20" y="282.50" font-size="12.4" fill="#1212f6" textLength="149.00" lengthAdjust="spacingAndGlyphs">steve@manufacton.com</text>
<rect x="729.2" y="285" width="149" height="1" fill="#1212f6"/>
</g>
<text x="872.67" y="282.50" font-size="12.4" fill="#000" textLength="23.91" lengthAdjust="spacingAndGlyphs">URL</text>
<clipPath id="cg3"><rect x="997" y="267" width="80" height="18.2"/></clipPath>
<g clip-path="url(#cg3)">
<text x="997.99" y="283.60" font-size="12.6" fill="#2a5cc6" textLength="67.40" lengthAdjust="spacingAndGlyphs">google.com</text>
</g>
<rect x="998.4" y="284.1" width="66.6" height="1.1" fill="#2a5cc6"/>
<text x="1079.70" y="282.50" font-size="12.4" fill="#000" textLength="59.63" lengthAdjust="spacingAndGlyphs">Kit note 2</text>
<text x="28.52" y="302.50" font-size="12.4" fill="#000" textLength="36.26" lengthAdjust="spacingAndGlyphs">Kit-03</text>
<text x="92.82" y="302.50" font-size="12.4" fill="#000" textLength="58.28" lengthAdjust="spacingAndGlyphs">Kit num 3</text>
<text x="185.06" y="303.60" font-size="14.0" fill="#000" textLength="55.44" lengthAdjust="spacingAndGlyphs">6/20/2021</text>
<text x="261.26" y="303.60" font-size="14.0" fill="#000" textLength="55.44" lengthAdjust="spacingAndGlyphs">6/21/2021</text>
<text x="353.16" y="303.60" font-size="14.0" fill="#000" textLength="55.44" lengthAdjust="spacingAndGlyphs">6/22/2021</text>
<text x="429.36" y="303.60" font-size="14.0" fill="#000" textLength="55.44" lengthAdjust="spacingAndGlyphs">6/23/2021</text>
<text x="505.46" y="303.60" font-size="14.0" fill="#000" textLength="55.44" lengthAdjust="spacingAndGlyphs">6/24/2021</text>
<text x="667.86" y="303.60" font-size="14.0" fill="#000" textLength="55.44" lengthAdjust="spacingAndGlyphs">6/22/2021</text>
<clipPath id="ce4"><rect x="727" y="287" width="143.2" height="20"/></clipPath>
<g clip-path="url(#ce4)">
<text x="729.20" y="302.50" font-size="12.4" fill="#1212f6" textLength="149.00" lengthAdjust="spacingAndGlyphs">steve@manufacton.com</text>
<rect x="729.2" y="305" width="149" height="1" fill="#1212f6"/>
</g>
<text x="872.67" y="302.50" font-size="12.4" fill="#000" textLength="23.91" lengthAdjust="spacingAndGlyphs">URL</text>
<clipPath id="cg4"><rect x="997" y="287" width="80" height="18.2"/></clipPath>
<g clip-path="url(#cg4)">
<text x="997.99" y="303.60" font-size="12.6" fill="#2a5cc6" textLength="67.40" lengthAdjust="spacingAndGlyphs">google.com</text>
</g>
<rect x="998.4" y="304.1" width="66.6" height="1.1" fill="#2a5cc6"/>
<text x="1079.70" y="302.50" font-size="12.4" fill="#000" textLength="59.63" lengthAdjust="spacingAndGlyphs">Kit note 3</text>
<text x="28.52" y="322.50" font-size="12.4" fill="#000" textLength="36.03" lengthAdjust="spacingAndGlyphs">Kit-04</text>
<text x="92.83" y="322.50" font-size="12.4" fill="#000" textLength="58.06" lengthAdjust="spacingAndGlyphs">Kit num 4</text>
<text x="185.06" y="323.60" font-size="14.0" fill="#000" textLength="55.44" lengthAdjust="spacingAndGlyphs">6/21/2021</text>
<text x="261.26" y="323.60" font-size="14.0" fill="#000" textLength="55.44" lengthAdjust="spacingAndGlyphs">6/22/2021</text>
<text x="353.16" y="323.60" font-size="14.0" fill="#000" textLength="55.44" lengthAdjust="spacingAndGlyphs">6/23/2021</text>
<text x="429.36" y="323.60" font-size="14.0" fill="#000" textLength="55.44" lengthAdjust="spacingAndGlyphs">6/24/2021</text>
<text x="505.46" y="323.60" font-size="14.0" fill="#000" textLength="55.44" lengthAdjust="spacingAndGlyphs">6/25/2021</text>
<text x="667.86" y="323.60" font-size="14.0" fill="#000" textLength="55.44" lengthAdjust="spacingAndGlyphs">6/23/2021</text>
<clipPath id="ce5"><rect x="727" y="307" width="143.2" height="20"/></clipPath>
<g clip-path="url(#ce5)">
<text x="729.20" y="322.50" font-size="12.4" fill="#1212f6" textLength="149.00" lengthAdjust="spacingAndGlyphs">steve@manufacton.com</text>
<rect x="729.2" y="325" width="149" height="1" fill="#1212f6"/>
</g>
<text x="872.67" y="322.50" font-size="12.4" fill="#000" textLength="23.91" lengthAdjust="spacingAndGlyphs">URL</text>
<clipPath id="cg5"><rect x="997" y="307" width="80" height="18.2"/></clipPath>
<g clip-path="url(#cg5)">
<text x="997.99" y="323.60" font-size="12.6" fill="#2a5cc6" textLength="67.40" lengthAdjust="spacingAndGlyphs">google.com</text>
</g>
<rect x="998.4" y="324.1" width="66.6" height="1.1" fill="#2a5cc6"/>
<text x="1079.70" y="322.50" font-size="12.4" fill="#000" textLength="59.41" lengthAdjust="spacingAndGlyphs">Kit note 4</text>
<text x="28.52" y="342.50" font-size="12.4" fill="#000" textLength="36.26" lengthAdjust="spacingAndGlyphs">Kit-05</text>
<text x="92.82" y="342.50" font-size="12.4" fill="#000" textLength="58.28" lengthAdjust="spacingAndGlyphs">Kit num 5</text>
<text x="185.06" y="343.60" font-size="14.0" fill="#000" textLength="55.44" lengthAdjust="spacingAndGlyphs">6/22/2021</text>
<text x="261.26" y="343.60" font-size="14.0" fill="#000" textLength="55.44" lengthAdjust="spacingAndGlyphs">6/23/2021</text>
<text x="353.16" y="343.60" font-size="14.0" fill="#000" textLength="55.44" lengthAdjust="spacingAndGlyphs">6/24/2021</text>
<text x="429.36" y="343.60" font-size="14.0" fill="#000" textLength="55.44" lengthAdjust="spacingAndGlyphs">6/25/2021</text>
<text x="505.46" y="343.60" font-size="14.0" fill="#000" textLength="55.44" lengthAdjust="spacingAndGlyphs">6/26/2021</text>
<text x="667.86" y="343.60" font-size="14.0" fill="#000" textLength="55.44" lengthAdjust="spacingAndGlyphs">6/24/2021</text>
<clipPath id="ce6"><rect x="727" y="327" width="143.2" height="20"/></clipPath>
<g clip-path="url(#ce6)">
<text x="729.20" y="342.50" font-size="12.4" fill="#1212f6" textLength="149.00" lengthAdjust="spacingAndGlyphs">steve@manufacton.com</text>
<rect x="729.2" y="345" width="149" height="1" fill="#1212f6"/>
</g>
<text x="872.67" y="342.50" font-size="12.4" fill="#000" textLength="23.91" lengthAdjust="spacingAndGlyphs">URL</text>
<clipPath id="cg6"><rect x="997" y="327" width="80" height="18.2"/></clipPath>
<g clip-path="url(#cg6)">
<text x="997.99" y="343.60" font-size="12.6" fill="#2a5cc6" textLength="67.40" lengthAdjust="spacingAndGlyphs">google.com</text>
</g>
<rect x="998.4" y="344.1" width="66.6" height="1.1" fill="#2a5cc6"/>
<text x="1079.70" y="342.50" font-size="12.4" fill="#000" textLength="59.63" lengthAdjust="spacingAndGlyphs">Kit note 5</text>
<text x="28.52" y="362.50" font-size="12.4" fill="#000" textLength="36.26" lengthAdjust="spacingAndGlyphs">Kit-06</text>
<text x="92.82" y="362.50" font-size="12.4" fill="#000" textLength="58.28" lengthAdjust="spacingAndGlyphs">Kit num 6</text>
<text x="185.06" y="363.60" font-size="14.0" fill="#000" textLength="55.44" lengthAdjust="spacingAndGlyphs">6/23/2021</text>
<text x="261.26" y="363.60" font-size="14.0" fill="#000" textLength="55.44" lengthAdjust="spacingAndGlyphs">6/24/2021</text>
<text x="353.16" y="363.60" font-size="14.0" fill="#000" textLength="55.44" lengthAdjust="spacingAndGlyphs">6/25/2021</text>
<text x="429.36" y="363.60" font-size="14.0" fill="#000" textLength="55.44" lengthAdjust="spacingAndGlyphs">6/26/2021</text>
<text x="505.46" y="363.60" font-size="14.0" fill="#000" textLength="55.44" lengthAdjust="spacingAndGlyphs">6/27/2021</text>
<text x="667.86" y="363.60" font-size="14.0" fill="#000" textLength="55.44" lengthAdjust="spacingAndGlyphs">6/25/2021</text>
<clipPath id="ce7"><rect x="727" y="347" width="143.2" height="20"/></clipPath>
<g clip-path="url(#ce7)">
<text x="729.20" y="362.50" font-size="12.4" fill="#1212f6" textLength="149.00" lengthAdjust="spacingAndGlyphs">steve@manufacton.com</text>
<rect x="729.2" y="365" width="149" height="1" fill="#1212f6"/>
</g>
<text x="872.67" y="362.50" font-size="12.4" fill="#000" textLength="23.91" lengthAdjust="spacingAndGlyphs">URL</text>
<clipPath id="cg7"><rect x="997" y="347" width="80" height="18.2"/></clipPath>
<g clip-path="url(#cg7)">
<text x="997.99" y="363.60" font-size="12.6" fill="#2a5cc6" textLength="67.40" lengthAdjust="spacingAndGlyphs">google.com</text>
</g>
<rect x="998.4" y="364.1" width="66.6" height="1.1" fill="#2a5cc6"/>
<text x="1079.70" y="362.50" font-size="12.4" fill="#000" textLength="59.63" lengthAdjust="spacingAndGlyphs">Kit note 6</text>
<text x="28.52" y="382.50" font-size="12.4" fill="#000" textLength="36.26" lengthAdjust="spacingAndGlyphs">Kit-07</text>
<text x="92.82" y="382.50" font-size="12.4" fill="#000" textLength="58.28" lengthAdjust="spacingAndGlyphs">Kit num 7</text>
<text x="185.06" y="383.60" font-size="14.0" fill="#000" textLength="55.44" lengthAdjust="spacingAndGlyphs">6/24/2021</text>
<text x="261.26" y="383.60" font-size="14.0" fill="#000" textLength="55.44" lengthAdjust="spacingAndGlyphs">6/25/2021</text>
<text x="353.16" y="383.60" font-size="14.0" fill="#000" textLength="55.44" lengthAdjust="spacingAndGlyphs">6/26/2021</text>
<text x="429.36" y="383.60" font-size="14.0" fill="#000" textLength="55.44" lengthAdjust="spacingAndGlyphs">6/27/2021</text>
<text x="505.46" y="383.60" font-size="14.0" fill="#000" textLength="55.44" lengthAdjust="spacingAndGlyphs">6/28/2021</text>
<text x="667.86" y="383.60" font-size="14.0" fill="#000" textLength="55.44" lengthAdjust="spacingAndGlyphs">6/26/2021</text>
<clipPath id="ce8"><rect x="727" y="367" width="143.2" height="20"/></clipPath>
<g clip-path="url(#ce8)">
<text x="729.20" y="382.50" font-size="12.4" fill="#1212f6" textLength="149.00" lengthAdjust="spacingAndGlyphs">steve@manufacton.com</text>
<rect x="729.2" y="385" width="149" height="1" fill="#1212f6"/>
</g>
<text x="872.67" y="382.50" font-size="12.4" fill="#000" textLength="23.91" lengthAdjust="spacingAndGlyphs">URL</text>
<clipPath id="cg8"><rect x="997" y="367" width="80" height="18.2"/></clipPath>
<g clip-path="url(#cg8)">
<text x="997.99" y="383.60" font-size="12.6" fill="#2a5cc6" textLength="67.40" lengthAdjust="spacingAndGlyphs">google.com</text>
</g>
<rect x="998.4" y="384.1" width="66.6" height="1.1" fill="#2a5cc6"/>
<text x="1079.70" y="382.50" font-size="12.4" fill="#000" textLength="59.63" lengthAdjust="spacingAndGlyphs">Kit note 7</text>
<text x="28.52" y="402.50" font-size="12.4" fill="#000" textLength="36.26" lengthAdjust="spacingAndGlyphs">Kit-08</text>
<text x="92.82" y="402.50" font-size="12.4" fill="#000" textLength="58.28" lengthAdjust="spacingAndGlyphs">Kit num 8</text>
<text x="185.06" y="403.60" font-size="14.0" fill="#000" textLength="55.44" lengthAdjust="spacingAndGlyphs">6/25/2021</text>
<text x="261.26" y="403.60" font-size="14.0" fill="#000" textLength="55.44" lengthAdjust="spacingAndGlyphs">6/26/2021</text>
<text x="353.16" y="403.60" font-size="14.0" fill="#000" textLength="55.44" lengthAdjust="spacingAndGlyphs">6/27/2021</text>
<text x="429.36" y="403.60" font-size="14.0" fill="#000" textLength="55.44" lengthAdjust="spacingAndGlyphs">6/28/2021</text>
<text x="505.46" y="403.60" font-size="14.0" fill="#000" textLength="55.44" lengthAdjust="spacingAndGlyphs">6/29/2021</text>
<text x="667.86" y="403.60" font-size="14.0" fill="#000" textLength="55.44" lengthAdjust="spacingAndGlyphs">6/27/2021</text>
<clipPath id="ce9"><rect x="727" y="387" width="143.2" height="20"/></clipPath>
<g clip-path="url(#ce9)">
<text x="729.20" y="402.50" font-size="12.4" fill="#1212f6" textLength="149.00" lengthAdjust="spacingAndGlyphs">steve@manufacton.com</text>
<rect x="729.2" y="405" width="149" height="1" fill="#1212f6"/>
</g>
<text x="872.67" y="402.50" font-size="12.4" fill="#000" textLength="23.91" lengthAdjust="spacingAndGlyphs">URL</text>
<clipPath id="cg9"><rect x="997" y="387" width="80" height="18.2"/></clipPath>
<g clip-path="url(#cg9)">
<text x="997.99" y="403.60" font-size="12.6" fill="#2a5cc6" textLength="67.40" lengthAdjust="spacingAndGlyphs">google.com</text>
</g>
<rect x="998.4" y="404.1" width="66.6" height="1.1" fill="#2a5cc6"/>
<text x="1079.70" y="402.50" font-size="12.4" fill="#000" textLength="59.63" lengthAdjust="spacingAndGlyphs">Kit note 8</text>
<text x="28.52" y="422.50" font-size="12.4" fill="#000" textLength="36.26" lengthAdjust="spacingAndGlyphs">Kit-09</text>
<text x="92.82" y="422.50" font-size="12.4" fill="#000" textLength="58.28" lengthAdjust="spacingAndGlyphs">Kit num 9</text>
<text x="185.06" y="423.60" font-size="14.0" fill="#000" textLength="55.44" lengthAdjust="spacingAndGlyphs">6/26/2021</text>
<text x="261.26" y="423.60" font-size="14.0" fill="#000" textLength="55.44" lengthAdjust="spacingAndGlyphs">6/27/2021</text>
<text x="353.16" y="423.60" font-size="14.0" fill="#000" textLength="55.44" lengthAdjust="spacingAndGlyphs">6/28/2021</text>
<text x="429.36" y="423.60" font-size="14.0" fill="#000" textLength="55.44" lengthAdjust="spacingAndGlyphs">6/29/2021</text>
<text x="505.46" y="423.60" font-size="14.0" fill="#000" textLength="55.44" lengthAdjust="spacingAndGlyphs">6/30/2021</text>
<text x="667.86" y="423.60" font-size="14.0" fill="#000" textLength="55.44" lengthAdjust="spacingAndGlyphs">6/28/2021</text>
<clipPath id="ce10"><rect x="727" y="407" width="143.2" height="20"/></clipPath>
<g clip-path="url(#ce10)">
<text x="729.20" y="422.50" font-size="12.4" fill="#1212f6" textLength="149.00" lengthAdjust="spacingAndGlyphs">steve@manufacton.com</text>
<rect x="729.2" y="425" width="149" height="1" fill="#1212f6"/>
</g>
<text x="872.67" y="422.50" font-size="12.4" fill="#000" textLength="23.91" lengthAdjust="spacingAndGlyphs">URL</text>
<clipPath id="cg10"><rect x="997" y="407" width="80" height="18.2"/></clipPath>
<g clip-path="url(#cg10)">
<text x="997.99" y="423.60" font-size="12.6" fill="#2a5cc6" textLength="67.40" lengthAdjust="spacingAndGlyphs">google.com</text>
</g>
<rect x="998.4" y="424.1" width="66.6" height="1.1" fill="#2a5cc6"/>
<text x="1079.70" y="422.50" font-size="12.4" fill="#000" textLength="59.63" lengthAdjust="spacingAndGlyphs">Kit note 9</text>
<text x="28.52" y="442.50" font-size="12.4" fill="#000" textLength="36.26" lengthAdjust="spacingAndGlyphs">Kit-10</text>
<text x="92.82" y="442.50" font-size="12.4" fill="#000" textLength="65.81" lengthAdjust="spacingAndGlyphs">Kit num 10</text>
<text x="185.06" y="443.60" font-size="14.0" fill="#000" textLength="55.44" lengthAdjust="spacingAndGlyphs">6/27/2021</text>
<text x="261.26" y="443.60" font-size="14.0" fill="#000" textLength="55.44" lengthAdjust="spacingAndGlyphs">6/28/2021</text>
<text x="353.16" y="443.60" font-size="14.0" fill="#000" textLength="55.44" lengthAdjust="spacingAndGlyphs">6/29/2021</text>
<text x="429.36" y="443.60" font-size="14.0" fill="#000" textLength="55.44" lengthAdjust="spacingAndGlyphs">6/30/2021</text>
<text x="512.39" y="443.60" font-size="14.0" fill="#000" textLength="48.51" lengthAdjust="spacingAndGlyphs">7/1/2021</text>
<text x="667.86" y="443.60" font-size="14.0" fill="#000" textLength="55.44" lengthAdjust="spacingAndGlyphs">6/29/2021</text>
<clipPath id="ce11"><rect x="727" y="427" width="143.2" height="20"/></clipPath>
<g clip-path="url(#ce11)">
<text x="729.20" y="442.50" font-size="12.4" fill="#1212f6" textLength="149.00" lengthAdjust="spacingAndGlyphs">steve@manufacton.com</text>
<rect x="729.2" y="445" width="149" height="1" fill="#1212f6"/>
</g>
<text x="872.67" y="442.50" font-size="12.4" fill="#000" textLength="23.91" lengthAdjust="spacingAndGlyphs">URL</text>
<clipPath id="cg11"><rect x="997" y="427" width="80" height="18.2"/></clipPath>
<g clip-path="url(#cg11)">
<text x="997.99" y="443.60" font-size="12.6" fill="#2a5cc6" textLength="67.40" lengthAdjust="spacingAndGlyphs">google.com</text>
</g>
<rect x="998.4" y="444.1" width="66.6" height="1.1" fill="#2a5cc6"/>
<rect x="1140.8" y="428" width="1.6" height="18" fill="#fff"/>
<text x="1079.70" y="442.50" font-size="12.4" fill="#000" textLength="67.26" lengthAdjust="spacingAndGlyphs">Kit note 10</text>
<rect x="26" y="227" width="65" height="21" fill="none" stroke="#1e7145" stroke-width="2"/>
<rect x="87.5" y="244.5" width="6" height="6" fill="#1e7145" stroke="#fff" stroke-width="1"/>
<rect x="1173" y="208" width="22" height="262" fill="#212121"/>
<rect x="1177.2" y="210" width="12.9" height="260" fill="#373737"/>
<rect x="1177.2" y="210.6" width="12.9" height="12.9" fill="#4a4a4a"/>
<path d="M1179.8 219.6 L1183.8 214.6 L1187.8 219.6 Z" stroke="none" fill="#9a9a9a" stroke-width="1"/>
<rect x="1177.2" y="225.3" width="12.9" height="136.4" fill="#4f4f4f"/>
<rect x="1177.2" y="457" width="12.9" height="13.2" fill="#4a4a4a"/>
<path d="M1179.8 461.4 L1183.8 466.4 L1187.8 461.4 Z" stroke="none" fill="#9a9a9a" stroke-width="1"/>
<rect x="0" y="470" width="1195" height="28" fill="#212121"/>
<path d="M33.4 480 V487 L29.4 483.5 Z" stroke="none" fill="#a6a6a6" stroke-width="1"/>
<path d="M57.6 480 V487 L61.6 483.5 Z" stroke="none" fill="#a6a6a6" stroke-width="1"/>
<rect x="101" y="470" width="52" height="23" fill="#fff"/>
<rect x="101" y="493" width="52" height="2" fill="#1e7145"/>
<text x="112.42" y="487.90" font-size="12.6" fill="#1e7145" font-weight="700" textLength="28.32" lengthAdjust="spacingAndGlyphs">KITS</text>
<text x="167.91" y="487.90" font-size="12.2" fill="#fff" textLength="92.25" lengthAdjust="spacingAndGlyphs" stroke="#fff" stroke-width="0.22">KIT ASSEMBLIES</text>
<rect x="274" y="474.3" width="1" height="19.2" fill="#a0a0a0"/>
<circle cx="316.1" cy="484" r="7.4" fill="none" stroke="#fff" stroke-width="1.4"/>
<path d="M312.4 484 H319.8 M316.1 480.3 V487.7" stroke="#fff" fill="none" stroke-width="1.9"/>
<circle cx="717.4" cy="479.6" r="1.15" fill="#d8d8d8"/>
<circle cx="717.4" cy="484.2" r="1.15" fill="#d8d8d8"/>
<circle cx="717.4" cy="488.8" r="1.15" fill="#d8d8d8"/>
<rect x="734.5" y="477.8" width="438" height="13" fill="#373737"/>
<rect x="734.5" y="477.8" width="13" height="13" fill="#4a4a4a"/>
<path d="M743 480.6 V488 L738.6 484.3 Z" stroke="none" fill="#9a9a9a" stroke-width="1"/>
<rect x="747.8" y="477.8" width="374.4" height="13" fill="#4f4f4f"/>
<rect x="1159.4" y="477.8" width="13.2" height="13" fill="#4a4a4a"/>
<path d="M1164 480.6 V488 L1168.4 484.3 Z" stroke="none" fill="#9a9a9a" stroke-width="1"/>
<rect x="0" y="498" width="1195" height="23" fill="#333231"/>
<rect x="882.6" y="498" width="40.2" height="23" fill="#5c5c5c"/>
<g fill="none" stroke="#fff" stroke-width="1.1">
<rect x="895.5" y="502.5" width="13" height="12"/><path d="M895.5 506.5 H908.5 M895.5 510.5 H908.5 M899.8 502.5 V514.5 M904.2 502.5 V514.5"/>
<rect x="936.5" y="502.5" width="13.5" height="12.5"/><rect x="939.5" y="505.5" width="7.5" height="6.5"/><path d="M941 507.6 H945.6 M941 509.8 H945.6"/>
<path d="M975.5 502.5 H989.5 V514.5 H975.5 Z M980 502.5 V508.5 H985 V502.5 M975.5 508.5 H980"/>
</g>
<line x1="1009.6" y1="509.5" x2="1017" y2="509.5" stroke="#fff" stroke-width="1.1"/>
<line x1="1022" y1="509.5" x2="1122" y2="509.5" stroke="#fff" stroke-width="1.1"/>
<rect x="1070.2" y="503" width="4.6" height="12.6" fill="#fff"/>
<path d="M1127 509.5 H1135 M1131 505.5 V513.5" stroke="#fff" fill="none" stroke-width="1.1"/>
<text x="1147.55" y="514.00" font-size="11.6" fill="#fff" textLength="27.73" lengthAdjust="spacingAndGlyphs" stroke="#fff" stroke-width="0.22">100%</text>
<rect x="141.5" y="332.5" width="493.3" height="89.5" fill="#fff"/>
<text x="141.34" y="367.20" font-size="31" fill="#ed1c24" font-weight="700" textLength="59.25" lengthAdjust="spacingAndGlyphs">THE</text>
<text x="210.33" y="367.20" font-size="31" fill="#ed1c24" font-weight="700" textLength="81.92" lengthAdjust="spacingAndGlyphs">FIRST</text>
<text x="299.31" y="367.20" font-size="31" fill="#ed1c24" font-weight="700" textLength="61.95" lengthAdjust="spacingAndGlyphs">TAB</text>
<text x="369.03" y="367.20" font-size="31" fill="#ed1c24" font-weight="700" textLength="26.76" lengthAdjust="spacingAndGlyphs">IS</text>
<text x="403.77" y="367.20" font-size="31" fill="#ed1c24" font-weight="700" textLength="81.46" lengthAdjust="spacingAndGlyphs">USED</text>
<text x="494.61" y="367.20" font-size="31" fill="#ed1c24" font-weight="700" textLength="125.39" lengthAdjust="spacingAndGlyphs">DURING</text>
<text x="142.28" y="412.10" font-size="31" fill="#ed1c24" font-weight="700" textLength="139.85" lengthAdjust="spacingAndGlyphs">IMPORTS</text>
<text x="293.46" y="412.10" font-size="31" fill="#ed1c24" font-weight="700" textLength="77.22" lengthAdjust="spacingAndGlyphs">INTO</text>
<text x="377.79" y="412.10" font-size="31" fill="#ed1c24" font-weight="700" textLength="228.48" lengthAdjust="spacingAndGlyphs">MANUFACTON</text>
<rect x="84.1" y="458.2" width="84.8" height="45.6" fill="none" stroke="#ed1c24" stroke-width="8.2"/>
<g fill="none" stroke="#ed1c24" stroke-width="8" stroke-linecap="round" stroke-linejoin="round">
<path d="M301.3 472.8 C296.5 438 205 425 127 456"/>
<path d="M150.8 430.6 L127 456 L167 455.6"/>
</g>
<rect x="0" y="0" width="1195" height="1" fill="#7a7a7a"/>
<rect x="0" y="0" width="1.4" height="521" fill="#777"/>
<rect x="1194" y="0" width="1" height="521" fill="#5a5a5a"/>
<rect x="0" y="520" width="1195" height="1" fill="#646464"/>
</svg>
</body></html>
